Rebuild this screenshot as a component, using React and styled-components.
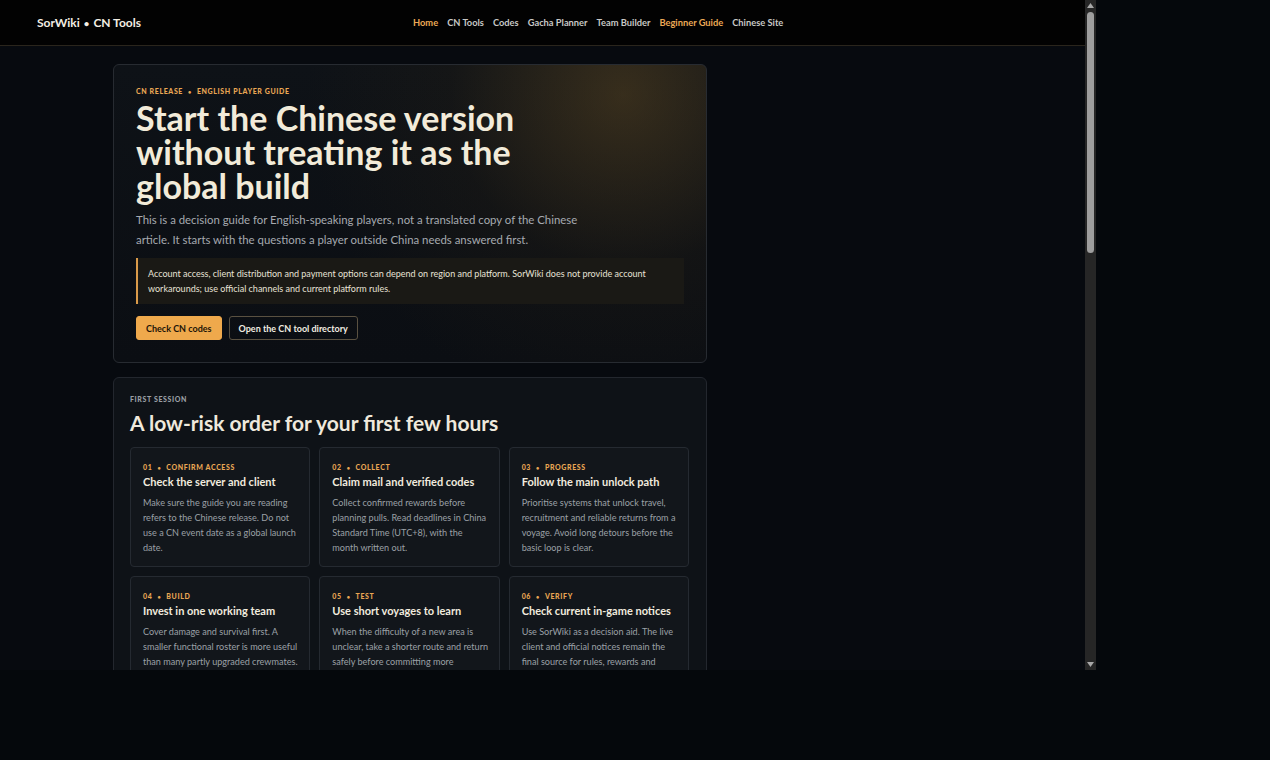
import React from 'react';
import styled, { createGlobalStyle } from 'styled-components';

const GlobalStyle = createGlobalStyle`
  html, body {
    margin: 0;
    padding: 0;
    background: #05080c;
  }
  body {
    font-family: Lato, "Noto Sans", "Liberation Sans", sans-serif;
    color: #eee8da;
  }
  * { box-sizing: border-box; }
`;

const Frame = styled('div')`
  width: 1096px;
  height: 670px;
  display: flex;
  background: #070a0f;
`;

const Viewport = styled('div')`
  flex: 1;
  min-width: 0;
  overflow: hidden;
`;

const Scrollbar = styled('div')`
  width: 11px;
  flex-shrink: 0;
  background: #262626;
  display: flex;
  flex-direction: column;
  align-items: center;
`;

const ScrollArrow = styled('div')`
  height: 11px;
  display: flex;
  align-items: center;
  justify-content: center;
`;

const ScrollThumb = styled('div')`
  width: 7px;
  height: 241px;
  margin-top: 1px;
  border-radius: 4px;
  background: #9e9e9e;
`;

const ScrollRest = styled('div')`
  flex: 1;
`;

const Header = styled('header')`
  height: 46px;
  background: #020202;
  border-bottom: 1px solid #2a251c;
  display: flex;
  align-items: center;
  padding: 0 37px 1px;
`;

const Logo = styled('a')`
  font-size: 12px;
  font-weight: 700;
  color: #f3eee4;
  text-decoration: none;
  width: 376px;
  flex-shrink: 0;
`;

const Nav = styled('nav')`
  display: flex;
  gap: 9px;
`;

const NavLink = styled('a')`
  font-size: 9.3px;
  font-weight: 700;
  color: ${(p) => (p.$accent ? '#eca955' : '#c8c8c6')};
  text-decoration: none;
`;

const Main = styled('main')`
  width: 859px;
  margin: 0 auto;
  padding: 18px 0 40px;
  display: grid;
  grid-template-columns: 594px 1fr;
  column-gap: 24px;
`;

const Column = styled('div')`
  display: flex;
  flex-direction: column;
  gap: 14px;
`;

const Hero = styled('section')`
  border: 1px solid #272b31;
  border-radius: 6px;
  padding: 22px 23px 22px 22px;
  background:
    radial-gradient(circle at 86% 10%, rgba(112, 84, 36, 0.42), rgba(60, 45, 20, 0.15) 30%, transparent 55%),
    linear-gradient(180deg, #0e1217, #0b0e13);
`;

const Eyebrow = styled('div')`
  font-size: 7px;
  font-weight: 900;
  letter-spacing: 0.09em;
  text-transform: uppercase;
  color: ${(p) => p.$color || '#e9a654'};
`;

const Dot = styled('span')`
  display: inline-block;
  margin: 0 ${(p) => p.$space || '5px'};
  font-size: 0.8em;
  transform: translateY(-0.05em);
`;

const Title = styled('h1')`
  margin: 6px 0 0;
  max-width: 420px;
  font-size: 34px;
  line-height: 34px;
  font-weight: 700;
  color: #f2ebd9;
`;

const Lead = styled('p')`
  margin: 7px 0 0;
  max-width: 450px;
  font-size: 11.4px;
  line-height: 20px;
  color: #a6aab0;
`;

const Note = styled('div')`
  margin-top: 8px;
  width: 548px;
  background: #1a1915;
  border-left: 2px solid #d99a4a;
  padding: 8px 10px;
  font-size: 9px;
  line-height: 15px;
  color: #e7e2d6;
`;

const Actions = styled('div')`
  margin-top: 12px;
  display: flex;
  gap: 7px;
`;

const Button = styled('a')`
  height: 24px;
  display: inline-flex;
  align-items: center;
  padding: 0 9px;
  border-radius: 3px;
  font-size: 9px;
  font-weight: 700;
  text-decoration: none;
  background: ${(p) => (p.$primary ? '#efa94c' : 'transparent')};
  color: ${(p) => (p.$primary ? '#1d1408' : '#f1ece1')};
  border: 1px solid ${(p) => (p.$primary ? '#efa94c' : '#5a5141')};
`;

const Panel = styled('section')`
  border: 1px solid #23272e;
  border-radius: 6px;
  background: #0e1217;
  padding: 17px 17px 18px 16px;
`;

const PanelTitle = styled('h2')`
  margin: 6px 0 10px;
  font-size: 21px;
  line-height: 28px;
  font-weight: 700;
  color: #efe9dc;
`;

const Steps = styled('div')`
  display: grid;
  grid-template-columns: repeat(3, 1fr);
  gap: 9px;
`;

const Step = styled('article')`
  background: #12161b;
  border: 1px solid #252a31;
  border-radius: 4px;
  padding: 15px 9px 11px 12px;
  min-height: 118px;
`;

const StepTitle = styled('h3')`
  margin: 3px 0 5px;
  font-size: 11px;
  line-height: 16px;
  font-weight: 700;
  color: #f1ebdf;
`;

const StepText = styled('p')`
  margin: 0;
  font-size: 9.1px;
  line-height: 15px;
  color: #9ba0a6;
`;

const steps = [
  ['01', 'Confirm access', 'Check the server and client', 'Make sure the guide you are reading refers to the Chinese release. Do not use a CN event date as a global launch date.'],
  ['02', 'Collect', 'Claim mail and verified codes', 'Collect confirmed rewards before planning pulls. Read deadlines in China Standard Time (UTC+8), with the month written out.'],
  ['03', 'Progress', 'Follow the main unlock path', 'Prioritise systems that unlock travel, recruitment and reliable returns from a voyage. Avoid long detours before the basic loop is clear.'],
  ['04', 'Build', 'Invest in one working team', 'Cover damage and survival first. A smaller functional roster is more useful than many partly upgraded crewmates.'],
  ['05', 'Test', 'Use short voyages to learn', 'When the difficulty of a new area is unclear, take a shorter route and return safely before committing more'],
  ['06', 'Verify', 'Check current in-game notices', 'Use SorWiki as a decision aid. The live client and official notices remain the final source for rules, rewards and'],
];

const nav = [
  ['Home', true],
  ['CN Tools', false],
  ['Codes', false],
  ['Gacha Planner', false],
  ['Team Builder', false],
  ['Beginner Guide', true],
  ['Chinese Site', false],
];

const Arrow = ({ down }) => (
  <svg width="7" height="5" viewBox="0 0 7 5">
    <polygon points={down ? '0,0 7,0 3.5,5' : '3.5,0 7,5 0,5'} fill="#a8a8a8" />
  </svg>
);

const App = () => {
  return (
    <>
      <GlobalStyle />
      <Frame>
        <Viewport>
          <Header>
            <Logo href="#">SorWiki<Dot $space="4px">•</Dot>CN Tools</Logo>
            <Nav>
              {nav.map(([label, accent]) => (
                <NavLink key={label} href="#" $accent={accent}>{label}</NavLink>
              ))}
            </Nav>
          </Header>
          <Main>
            <Column>
              <Hero>
                <Eyebrow>CN Release<Dot>•</Dot>English Player Guide</Eyebrow>
                <Title>Start the Chinese version without treating it as the global build</Title>
                <Lead>
                  This is a decision guide for English-speaking players, not a translated copy of the Chinese
                  article. It starts with the questions a player outside China needs answered first.
                </Lead>
                <Note>
                  Account access, client distribution and payment options can depend on region and platform.
                  SorWiki does not provide account workarounds; use official channels and current platform rules.
                </Note>
                <Actions>
                  <Button href="#" $primary>Check CN codes</Button>
                  <Button href="#">Open the CN tool directory</Button>
                </Actions>
              </Hero>
              <Panel>
                <Eyebrow $color="#9a9fa5">First Session</Eyebrow>
                <PanelTitle>A low-risk order for your first few hours</PanelTitle>
                <Steps>
                  {steps.map(([n, tag, title, text]) => (
                    <Step key={n}>
                      <Eyebrow>{n}<Dot>•</Dot>{tag}</Eyebrow>
                      <StepTitle>{title}</StepTitle>
                      <StepText>{text}</StepText>
                    </Step>
                  ))}
                </Steps>
              </Panel>
            </Column>
            <aside />
          </Main>
        </Viewport>
        <Scrollbar>
          <ScrollArrow><Arrow /></ScrollArrow>
          <ScrollThumb />
          <ScrollRest />
          <ScrollArrow><Arrow down /></ScrollArrow>
        </Scrollbar>
      </Frame>
    </>
  );
};

export default App;
